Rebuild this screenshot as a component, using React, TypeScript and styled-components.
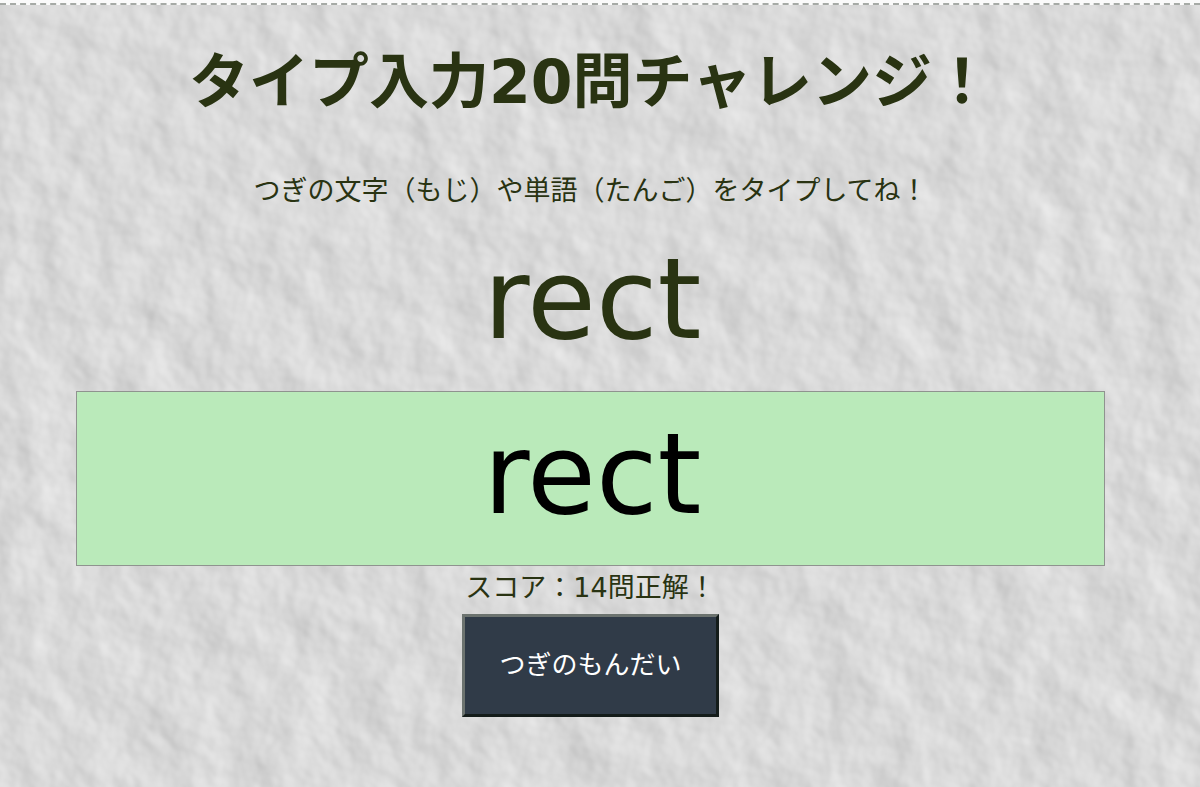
import React, { useState } from "react";
import styled, { createGlobalStyle } from "styled-components";

const GlobalStyle = createGlobalStyle`
  * {
    box-sizing: border-box;
  }

  body {
    margin: 0;
    background: #fafafa;
    color: #293312;
    font-family: "DejaVu Sans", "Noto Sans CJK JP", sans-serif;
  }
`;

const Page = styled.div`
  position: relative;
  display: flow-root;
  min-height: calc(100vh - 3px);
  margin-top: 3px;
  border-top: 2px dashed #a6aaa6;
  overflow: hidden;
`;

const Wall = styled.svg`
  position: absolute;
  inset: 0;
  width: 100%;
  height: 100%;
`;

const Challenge = styled.main`
  position: relative;
  display: flex;
  flex-direction: column;
  align-items: center;
  padding: 32px 95px 70px 76px;
  text-align: center;
`;

const Title = styled.h1`
  margin: 0;
  font-size: 60px;
  line-height: 90px;
  font-weight: 700;
`;

const Note = styled.p`
  margin: 0;
  font-size: 27px;
  line-height: 44px;
`;

const Guide = styled(Note).attrs({ as: "label" })`
  margin-top: 42px;
`;

const Word = styled.p`
  margin: 0;
  padding: 0 0 6px 4px;
  font-size: 112px;
  line-height: 172px;
`;

const Answer = styled.input`
  width: 100%;
  height: 175px;
  padding: 0 0 10px 4px;
  border: 1px solid #8f938f;
  border-radius: 0;
  outline: 0;
  background: #baeaba;
  color: #000;
  font: inherit;
  font-size: 112px;
  text-align: center;
`;

const NextButton = styled.button`
  margin-top: 4px;
  padding: 31px 34px;
  border: 3px solid;
  border-color: #6c736f #141c1a #141c1a #6c736f;
  background: #303b48;
  color: #fff;
  font: inherit;
  font-size: 26px;
  line-height: 35px;
`;

function Texture() {
  return (
    <Wall aria-hidden="true">
      <filter
        id="plaster"
        x="-2%"
        y="-2%"
        width="104%"
        height="104%"
        colorInterpolationFilters="sRGB"
      >
        <feTurbulence type="fractalNoise" baseFrequency="0.019" numOctaves="4" seed="8" />
        <feGaussianBlur stdDeviation="1.8" />
        <feDiffuseLighting surfaceScale="2" diffuseConstant="0.985" lightingColor="#fff">
          <feDistantLight azimuth="335" elevation="60" />
        </feDiffuseLighting>
        <feGaussianBlur stdDeviation="0.8" />
      </filter>
      <rect width="100%" height="102%" filter="url(#plaster)" />
    </Wall>
  );
}

export default function App() {
  const [answer, setAnswer] = useState("rect");

  return (
    <>
      <GlobalStyle />
      <Page>
        <Texture />
        <Challenge>
          <Title>タイプ入力20問チャレンジ！</Title>
          <Guide htmlFor="answer">つぎの文字（もじ）や単語（たんご）をタイプしてね！</Guide>
          <Word>rect</Word>
          <Answer
            id="answer"
            type="text"
            autoComplete="off"
            spellCheck={false}
            value={answer}
            onChange={(event) => setAnswer(event.target.value)}
          />
          <Note>スコア：14問正解！</Note>
          <NextButton type="button">つぎのもんだい</NextButton>
        </Challenge>
      </Page>
    </>
  );
}
